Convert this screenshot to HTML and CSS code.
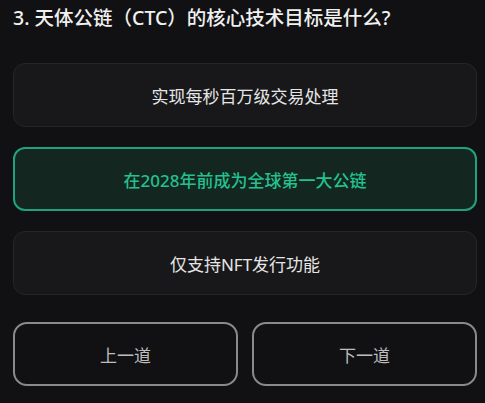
FILE: index.html
```html
<!DOCTYPE html>
<html lang="zh-CN">
<head>
    <meta charset="UTF-8">
    <meta name="viewport" content="width=device-width, initial-scale=1.0">
    <title>答题</title>
    <link rel="stylesheet" href="styles.css">
</head>
<body>
    <div class="quiz">
        <div class="question">3. 天体公链（CTC）的核心技术目标是什么?</div>

        <div class="options">
            <div class="option">实现每秒百万级交易处理</div>
            <div class="option selected">在2028年前成为全球第一大公链</div>
            <div class="option">仅支持NFT发行功能</div>
        </div>

        <div class="nav">
            <button class="nav-button">上一道</button>
            <button class="nav-button">下一道</button>
        </div>
    </div>
</body>
</html>
```

FILE: styles.css
```css
body {
    margin: 0;
    background-color: #111113;
    color: #ececec;
    font-family: "Noto Sans", "Noto Sans CJK SC", sans-serif;
}

.quiz {
    padding: 3px 8px 0 13px;
}

.question {
    font-size: 19.5px;
    font-weight: 500;
    line-height: 29px;
    color: #f0f0f0;
}

.options {
    display: flex;
    flex-direction: column;
    gap: 20px;
    margin-top: 31px;
}

.option {
    height: 62px;
    display: flex;
    justify-content: center;
    align-items: center;
    background-color: #18181a;
    border: 1px solid #262628;
    border-radius: 12px;
    font-size: 17px;
    color: #e6e6e6;
}

/* ausgewählte Antwort */
.option.selected {
    height: 60px;
    background-color: #13261f;
    border: 2px solid #1fa37f;
    color: #24c08f;
    font-weight: 500;
}

.nav {
    display: flex;
    gap: 14px;
    margin-top: 27px;
}

.nav-button {
    flex: 1;
    height: 64px;
    background: transparent;
    border: 2px solid #8a8a8a;
    border-radius: 14px;
    font-family: inherit;
    font-size: 17px;
    color: #bdbdbd;
    cursor: pointer;
}
```
